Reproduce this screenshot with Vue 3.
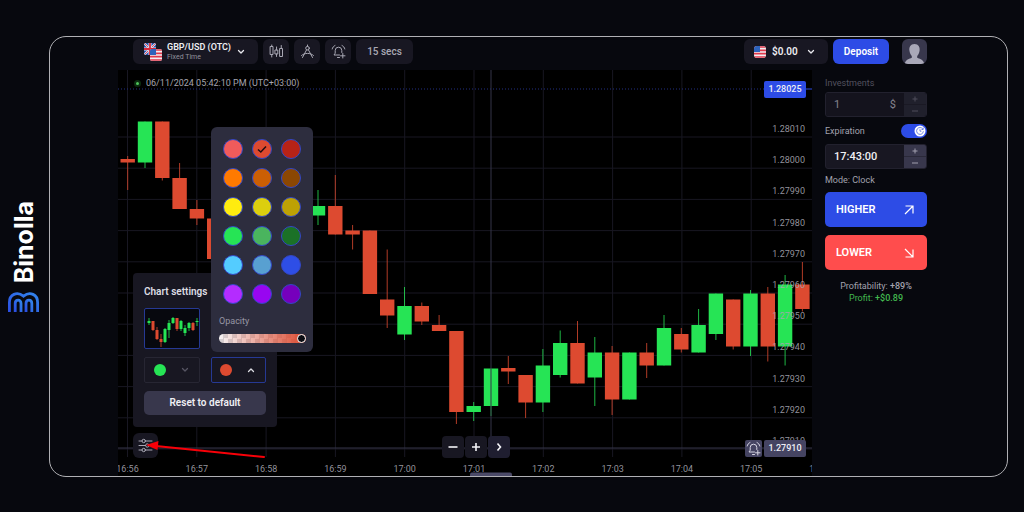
<script setup>
import { ref } from 'vue'

const step = 17.3
const firstX = 9.7

// [slot, colour, body top, body bottom, wick top, wick bottom]
const candles = [
  [0, 'r', 89, 92.5, 86, 120],
  [1, 'g', 51.5, 92.5, 51.5, 98],
  [2, 'r', 51.5, 108, 51.5, 110.5],
  [3, 'r', 108, 139, 93, 139],
  [4, 'r', 139, 148.5, 130, 155],
  [5, 'r', 148.5, 189, 148.5, 189],
  [11, 'g', 136, 145.5, 120, 155],
  [12, 'r', 136, 164.5, 105, 164.5],
  [13, 'r', 160.5, 164.5, 155, 179.5],
  [14, 'r', 160.5, 224, 160.5, 224],
  [15, 'r', 229.5, 245.5, 179.5, 258],
  [16, 'g', 236, 264.5, 217, 270],
  [17, 'r', 236, 251.5, 232.5, 255],
  [18, 'r', 255, 261, 245, 261],
  [19, 'r', 261, 342, 261, 354],
  [20, 'g', 336, 342, 332, 351],
  [21, 'g', 298.5, 336, 298.5, 346],
  [22, 'r', 298, 301.5, 286, 314],
  [23, 'r', 305, 332.5, 305, 348],
  [24, 'g', 295.5, 332.5, 279, 342],
  [25, 'g', 273, 305, 260.5, 307.5],
  [26, 'r', 273, 313.5, 251, 313.5],
  [27, 'g', 282.5, 307.5, 267, 336],
  [28, 'r', 282.5, 329.5, 276, 345],
  [29, 'g', 282.5, 329.5, 282.5, 329.5],
  [30, 'r', 282.5, 295.5, 273, 308],
  [31, 'g', 258, 295.5, 245, 295.5],
  [32, 'r', 264, 279.5, 258, 282.5],
  [33, 'g', 255, 282.5, 239, 282.5],
  [34, 'g', 223.5, 264, 223.5, 270],
  [35, 'r', 229.5, 276.5, 229.5, 279.5],
  [36, 'g', 223.5, 276.5, 220, 286],
  [37, 'r', 223.5, 276.5, 217, 291.5],
  [38, 'g', 214.5, 276.5, 205, 295.5],
  [39, 'r', 214.5, 239, 192, 241.5],
].map(([i, c, top, bottom, high, low]) => ({ x: firstX + i * step, c, top, bottom, high, low }))

const prices = ['1.28010', '1.28000', '1.27990', '1.27980', '1.27970', '1.27960', '1.27950', '1.27940', '1.27930', '1.27920', '1.27910']
  .map((label, i) => ({ label, y: 62 + i * 31.2, line: 67 + i * 31.2 }))

const times = ['16:56', '16:57', '16:58', '16:59', '17:00', '17:01', '17:02', '17:03', '17:04', '17:05', '17:06']
  .map((label, i) => ({ label, x: 9.5 + i * 69.3 }))

const miniCandles = [
  [4, 'g', 12, 14, 9, 16], [8, 'r', 12, 21, 12, 22], [12, 'r', 21, 30, 18, 31], [16, 'r', 30, 33, 25, 38],
  [20, 'g', 20, 33, 19, 34], [24, 'g', 14, 21, 11, 29], [28, 'g', 9, 14, 8, 15], [32, 'r', 9, 20, 9, 22],
  [36, 'g', 12, 20, 11, 22], [40, 'g', 19, 24, 16, 27], [44, 'g', 14, 19, 13, 22], [48, 'r', 14, 21, 13, 22], [52, 'g', 12, 13, 9, 17],
].map(([x, c, top, bottom, high, low]) => ({ x, c, top, bottom, high, low }))

const colours = [
  ['coral', '#f05b5b'], ['tomato', '#dd4a30'], ['crimson', '#b72317'],
  ['orange', '#ff7a00'], ['dark orange', '#cb5f04'], ['brown', '#8b4703'],
  ['yellow', '#ffec0f'], ['mustard', '#dccf0e'], ['olive', '#bda104'],
  ['green', '#26e455'], ['mid green', '#4ab45e'], ['dark green', '#1b7127'],
  ['sky', '#54ccff'], ['steel', '#58a0d1'], ['blue', '#2e4ee6'],
  ['violet', '#b42cff'], ['purple', '#9806f0'], ['dark purple', '#7600bc'],
]
const downColour = ref('#dd4a30')
const opacity = ref(100)
const amount = ref('1')
const expiry = ref('17:43:00')
const clockMode = ref(true)
</script>

<template>
  <div class="page">
    <aside class="brand">
      <span class="brand-name">Binolla</span>
      <svg class="brand-mark" viewBox="0 0 31 20" aria-hidden="true">
        <defs>
          <linearGradient id="mark" x1="0" y1="1" x2="1" y2="0">
            <stop offset="0" stop-color="#2b4fe4" /><stop offset="1" stop-color="#3284ea" />
          </linearGradient>
        </defs>
        <g fill="none" stroke="url(#mark)" stroke-width="2.8">
          <path d="M1.400 20V10.500C1.400 2.500 9 -1 15.500 4.200C22 -1 29.600 2.500 29.600 10.500V20" />
          <path d="M7.200 20V11.500C7.200 7 13 7 13 11.500V20" />
          <path d="M18 20V11.500C18 7 23.800 7 23.800 11.500V20" />
        </g>
      </svg>
    </aside>

    <main class="frame">
      <header class="topbar">
        <button class="tile pair" type="button">
          <svg class="flags" viewBox="0 0 18 18" aria-hidden="true">
            <defs>
              <clipPath id="uk"><rect width="12" height="12" rx="2" /></clipPath>
              <clipPath id="us"><rect x="6" y="6" width="12" height="12" rx="2" /></clipPath>
            </defs>
            <g clip-path="url(#uk)">
              <rect width="12" height="12" fill="#2450a8" />
              <path d="M0 0L12 12M12 0L0 12" stroke="#e8e8f4" stroke-width="2" />
              <path d="M0 0L12 12M12 0L0 12" stroke="#d8283c" stroke-width="0.800" />
              <path d="M6 0V12M0 6H12" stroke="#e8e8f4" stroke-width="3" />
              <path d="M6 0V12M0 6H12" stroke="#d8283c" stroke-width="1.800" />
            </g>
            <g clip-path="url(#us)">
              <rect x="6" y="6" width="12" height="12" fill="#f1eef2" />
              <path d="M6 7H18M6 10.300H18M6 13.600H18M6 17H18" stroke="#e0394c" stroke-width="1.700" />
              <rect x="6" y="6" width="6" height="6" fill="#2d63bc" />
            </g>
          </svg>
          <span class="pair-text"><b>GBP/USD (OTC)</b><small>Fixed Time</small></span>
          <svg class="chev" viewBox="0 0 8 6" aria-hidden="true"><path d="M1.500 1.500L4 4L6.500 1.500" /></svg>
        </button>
        <button class="tile square" type="button" aria-label="Chart type">
          <svg class="icon" viewBox="0 0 15 15" aria-hidden="true">
            <rect x="1.500" y="2.500" width="2.500" height="8" /><path d="M2.750 1V2.500M2.750 10.500V13" />
            <rect x="6.300" y="6" width="2.500" height="4" /><path d="M7.550 3V6M7.550 10V12.500" />
            <rect x="11" y="4.500" width="2.500" height="8" /><path d="M12.250 1.500V4.500" />
          </svg>
        </button>
        <button class="tile square" type="button" aria-label="Drawing tools">
          <svg class="icon" viewBox="0 0 15 15" aria-hidden="true">
            <circle cx="7.500" cy="4.200" r="1.800" /><path d="M7.500 1V2.400M6.600 5.800L2.500 13.500M8.400 5.800L12.500 13.500M1.500 11.500C4.500 8.600 10.500 8.600 13.500 11.500" />
          </svg>
        </button>
        <button class="tile square" type="button" aria-label="Add alert">
          <svg class="icon" viewBox="0 0 15 15" aria-hidden="true">
            <path d="M8.500 11H3L4.200 9.200V6.500A3.300 3.300 0 0 1 10.800 6.500V8.500M6.500 13.500H8.500M4 1.500C2.500 2.200 1.500 3.500 1.200 5M11 1.500C12.500 2.200 13.500 3.500 13.800 5M11.800 9.500V14M9.500 11.800H14" />
          </svg>
        </button>
        <button class="tile interval" type="button">15 secs</button>
        <button class="tile balance" type="button">
          <svg class="flag" viewBox="0 0 12 12" aria-hidden="true">
            <defs><clipPath id="us2"><rect width="12" height="12" rx="3" /></clipPath></defs>
            <g clip-path="url(#us2)">
              <rect width="12" height="12" fill="#f1eef2" />
              <path d="M0 1H12M0 4.300H12M0 7.600H12M0 11H12" stroke="#e0394c" stroke-width="1.700" />
              <rect width="6" height="6" fill="#2d63bc" />
            </g>
          </svg>
          <b>$0.00</b>
          <svg class="chev" viewBox="0 0 8 6" aria-hidden="true"><path d="M1.500 1.500L4 4L6.500 1.500" /></svg>
        </button>
        <button class="deposit" type="button">Deposit</button>
        <button class="avatar" type="button" aria-label="Profile">
          <svg viewBox="0 0 25 25" aria-hidden="true">
            <path fill="#a9a8b8" d="M12.500 5C16.500 5 18 8 17.600 11.500C17.300 14 16.300 15.800 15.200 17V18.800C17.500 20 21.500 20.500 22.300 25H2.700C3.500 20.500 7.500 20 9.800 18.800V17C8.700 15.800 7.700 14 7.400 11.500C7 8 8.500 5 12.500 5Z" />
          </svg>
        </button>
      </header>

      <div class="body">
        <section class="chart">
          <svg class="plot" viewBox="0 0 694 406" role="img" aria-label="GBP/USD price chart">
            <g class="grid">
              <line v-for="p in prices" :key="p.label" x1="0" x2="694" :y1="p.line" :y2="p.line" />
              <line v-for="t in times" :key="t.label" :x1="t.x" :x2="t.x" y1="0" y2="387" />
            </g>
            <line class="dotted" x1="0" x2="646" y1="19" y2="19" />
            <line class="marker" x1="687" x2="694" y1="19" y2="19" />
            <g v-for="k in candles" :key="k.x" :class="k.c">
              <line class="wick" :x1="k.x" :x2="k.x" :y1="k.high" :y2="k.low" />
              <rect :x="k.x - 7.2" :y="k.top" width="14.400" :height="k.bottom - k.top" />
            </g>
            <line class="cross" x1="0" x2="694" y1="378" y2="378" />
            <line class="cross" x1="373" x2="373" y1="0" y2="377" />
            <text v-for="p in prices" :key="p.label" class="price" x="687" :y="p.y">{{ p.label }}</text>
            <text v-for="t in times" :key="t.label" class="time" :x="t.x" y="401.500">{{ t.label }}</text>
            <rect class="handle" x="352" y="402.500" width="42" height="8" rx="2" />
          </svg>

          <p class="clock"><i class="dot"></i>06/11/2024 05:42:10 PM (UTC+03:00)</p>
          <span class="tag current">1.28025</span>
          <div class="cursor-tags">
            <button class="alert" type="button" aria-label="Add alert at price">
              <svg class="icon" viewBox="0 0 15 15" aria-hidden="true">
                <path d="M8.500 11H3L4.200 9.200V6.500A3.300 3.300 0 0 1 10.800 6.500V8.500M6.500 13.500H8.500M4 1.500C2.500 2.200 1.500 3.500 1.200 5M11 1.500C12.500 2.200 13.500 3.500 13.800 5M11.800 9.500V14M9.500 11.800H14" />
              </svg>
            </button>
            <span class="tag">1.27910</span>
          </div>

          <div class="zoom">
            <button type="button" aria-label="Zoom out"><svg viewBox="0 0 12 12"><path d="M1.500 6H10.500" /></svg></button>
            <button type="button" aria-label="Zoom in"><svg viewBox="0 0 12 12"><path d="M2 6H10M6 2V10" /></svg></button>
            <button type="button" aria-label="Scroll to latest"><svg viewBox="0 0 12 12"><path d="M4.500 2.500L7.500 6L4.500 9.500" /></svg></button>
          </div>

          <div class="settings">
            <h2>Chart settings</h2>
            <button class="preview" type="button" aria-label="Candles">
              <svg viewBox="0 0 54 39" aria-hidden="true">
                <g v-for="k in miniCandles" :key="k.x" :class="k.c">
                  <line class="wick" :x1="k.x" :x2="k.x" :y1="k.high" :y2="k.low" />
                  <rect :x="k.x - 1.5" :y="k.top" width="3" :height="k.bottom - k.top" />
                </g>
              </svg>
            </button>
            <div class="pickers">
              <button class="picker" type="button" aria-label="Rising candle colour">
                <i class="blob up"></i><svg class="chev" viewBox="0 0 8 6"><path d="M1.500 1.500L4 4L6.500 1.500" /></svg>
              </button>
              <button class="picker open" type="button" aria-label="Falling candle colour" aria-expanded="true">
                <i class="blob" :style="{ background: downColour }"></i><svg class="chev" viewBox="0 0 8 6"><path d="M1.500 4.500L4 2L6.500 4.500" /></svg>
              </button>
            </div>
            <button class="reset" type="button">Reset to default</button>
          </div>

          <div class="palette">
            <div class="swatches">
              <label v-for="[name, hex] in colours" :key="hex" class="swatch" :style="{ background: hex }">
                <input v-model="downColour" type="radio" name="colour" :value="hex" :aria-label="name" />
                <svg v-if="downColour === hex" viewBox="0 0 10 10" aria-hidden="true"><path d="M1 5.500L3.800 8L9 2.500" /></svg>
              </label>
            </div>
            <label class="opacity-label" for="opacity">Opacity</label>
            <input id="opacity" v-model="opacity" class="opacity" type="range" min="0" max="100" />
          </div>

          <button class="settings-toggle" type="button" aria-label="Chart settings">
            <svg class="icon" viewBox="0 0 15 15" aria-hidden="true">
              <path d="M1 3H4M7.500 3H14M1 7.500H7.500M11 7.500H14M1 12H4M7.500 12H14" />
              <circle cx="5.700" cy="3" r="1.700" /><circle cx="9.300" cy="7.500" r="1.700" /><circle cx="5.700" cy="12" r="1.700" />
            </svg>
          </button>
          <svg class="pointer" viewBox="0 0 120 18" aria-hidden="true">
            <path d="M10 5L118 16" stroke="#f80008" stroke-width="2" stroke-linecap="round" />
            <path d="M0 4L12.500 0L11.500 9Z" fill="#f80008" />
          </svg>
        </section>

        <form class="trade" @submit.prevent>
          <label class="dim" for="amount">Investments</label>
          <div class="field muted">
            <div class="box"><input id="amount" v-model="amount" type="text" /><span>$</span></div>
            <div class="stepper">
              <button type="button" aria-label="Increase investment"><svg viewBox="0 0 6 6"><path d="M0.500 3H5.500M3 0.500V5.500" /></svg></button>
              <button type="button" aria-label="Decrease investment"><svg viewBox="0 0 6 6"><path d="M0 3H6" /></svg></button>
            </div>
          </div>
          <div class="row">
            <label for="expiry">Expiration</label>
            <label class="switch">
              <input v-model="clockMode" type="checkbox" aria-label="Clock mode" />
              <svg viewBox="0 0 12 12" aria-hidden="true">
                <circle cx="6" cy="6" r="5.500" fill="#fff" />
                <path d="M8.800 4A3.400 3.400 0 1 0 9.400 6.300M9.200 2.500V4.500H7.500M6 4.300V6.200H7.400" fill="none" stroke="#4a63dc" stroke-width="0.800" />
              </svg>
            </label>
          </div>
          <div class="field">
            <div class="box"><input id="expiry" v-model="expiry" type="text" /></div>
            <div class="stepper">
              <button type="button" aria-label="Later"><svg viewBox="0 0 6 6"><path d="M0.500 3H5.500M3 0.500V5.500" /></svg></button>
              <button type="button" aria-label="Earlier"><svg viewBox="0 0 6 6"><path d="M0 3H6" /></svg></button>
            </div>
          </div>
          <p class="mode">Mode: Clock</p>
          <button class="bet higher" type="submit">HIGHER
            <svg viewBox="0 0 12 12" aria-hidden="true"><path d="M2 10L10 2M2.500 2H10V9.500" /></svg>
          </button>
          <button class="bet lower" type="submit">LOWER
            <svg viewBox="0 0 12 12" aria-hidden="true"><path d="M2 2L10 10M10 2.500V10H2.500" /></svg>
          </button>
          <p class="result">Profitability: <b>+89%</b></p>
          <p class="result gain">Profit: <b>+$0.89</b></p>
        </form>
      </div>
    </main>
  </div>
</template>

<style>
body { background: #07080e; }
</style>

<style scoped>
* { box-sizing: border-box; }
.page { display: flex; min-height: 100vh; padding: 36px 16px 35px 0; background: #07080e; color: #a3a2ae; font-family: Roboto, "Liberation Sans", sans-serif; font-size: 9px; line-height: 12px; }
button, input { font: inherit; color: inherit; margin: 0; padding: 0; border: 0; background: none; }
button { display: flex; align-items: center; justify-content: center; cursor: pointer; }
p, h2 { margin: 0; }
b { font-weight: 500; }
svg { display: block; }

.brand { display: flex; flex-direction: column; align-items: center; justify-content: center; gap: 8px; width: 49px; padding-right: 2px; }
.brand-name { writing-mode: vertical-rl; transform: rotate(180deg); font-family: Inter, sans-serif; font-weight: 700; font-size: 25px; line-height: 28px; color: #fff; }
.brand-mark { width: 31px; height: 20px; }

.frame { flex: 1; align-self: flex-start; min-width: 0; padding: 0 80px 0 68px; border: 1px solid #b0b0b4; border-radius: 17px; overflow: hidden; }

.topbar { display: flex; gap: 5px; padding: 2px 0 6px 15px; }
.tile { height: 25px; border-radius: 6px; background: #181722; color: #a9a8b4; }
.square { width: 26px; }
.icon { width: 15px; height: 15px; fill: none; stroke: #a9a8b4; stroke-width: 1; stroke-linecap: round; stroke-linejoin: round; }
.chev { width: 8px; height: 6px; fill: none; stroke: #e8e8ee; stroke-width: 1.300; stroke-linecap: round; stroke-linejoin: round; }
.pair { gap: 5px; padding: 0 13px 0 11px; width: 125px; justify-content: flex-start; }
.pair .chev { margin-left: auto; }
.flags { width: 18px; height: 18px; }
.pair-text { display: flex; flex-direction: column; text-align: left; line-height: 10px; white-space: nowrap; }
.pair-text b { color: #eeeef2; font-weight: 600; }
.pair-text small { font-size: 7px; color: #92919c; }
.interval { width: 57px; font-size: 10px; font-weight: 500; }
.balance { margin-left: auto; width: 84px; gap: 6px; color: #eeeef2; font-size: 10px; justify-content: flex-start; padding: 0 13px 0 10px; }
.balance .chev { margin-left: auto; }
.balance b { font-weight: 600; }
.flag { width: 12px; height: 12px; }
.deposit { height: 25px; width: 56px; border-radius: 6px; background: #2d4ce6; color: #fff; font-size: 10px; font-weight: 600; }
.avatar { width: 25px; height: 25px; margin-left: 8px; border-radius: 6px; background: #38374c; overflow: hidden; }
.avatar svg { width: 25px; height: 25px; }

.body { display: flex; gap: 13px; align-items: flex-start; }
.chart { position: relative; flex: 1; min-width: 0; background: #000; }
.plot { width: 100%; height: auto; }
.grid line { stroke: #181722; stroke-width: 1; }
.dotted { stroke: #222e80; stroke-dasharray: 1 2; }
.marker { stroke: #2d4ce6; }
.cross { stroke: #353448; stroke-width: 1; }
.g { fill: #26e455; stroke: #26e455; }
.r { fill: #dd4a30; stroke: #dd4a30; }
.g rect, .r rect { stroke: none; }
.wick { stroke-width: 1; opacity: 0.8; }
.price, .time { font-size: 9px; fill: #a5a4af; fill-opacity: 0.9; }
.price { text-anchor: end; }
.time { text-anchor: middle; }
.handle { fill: #4b4a68; }

.clock { position: absolute; left: 16px; top: 7px; display: flex; align-items: center; gap: 5px; color: #a5a4af; white-space: nowrap; }
.dot { width: 7px; height: 7px; border-radius: 4px; border: 2px solid #0c2d11; background: #4fc45c; }
.tag { display: block; width: 42px; border-radius: 2px; background: #454462; color: #eeeef5; font-weight: 500; line-height: 17px; text-align: center; }
.current { position: absolute; right: 6px; top: 11px; background: #2d4ce6; }
.cursor-tags { position: absolute; right: 6px; bottom: 19px; display: flex; gap: 2px; }
.alert { width: 17px; height: 17px; border-radius: 2px; background: #454462; }
.alert .icon { stroke: #d5d4e2; }

.zoom { position: absolute; left: 324px; bottom: 18px; display: flex; gap: 1px; }
.zoom button { width: 22px; height: 22px; border-radius: 4px; background: #181722; }
.zoom button:last-child { background: #1f1e30; }
.zoom svg { width: 12px; height: 12px; fill: none; stroke: #f4f4f8; stroke-width: 1.600; }

.settings { position: absolute; left: 15px; bottom: 49px; width: 144px; padding: 12px 11px; border-radius: 4px; background: #181722; }
.settings h2 { font-size: 10px; line-height: 13px; font-weight: 600; color: #dddde3; }
.preview { width: 56px; height: 41px; margin-top: 10px; border: 1px solid #263994; border-radius: 2px; background: #07080e; }
.preview svg { width: 54px; height: 39px; }
.pickers { display: flex; gap: 11px; margin: 8px 0; }
.picker { flex: 1; height: 26px; padding: 0 10px 0 9px; justify-content: space-between; border: 1px solid #272633; border-radius: 2px; }
.picker .chev { stroke: #565563; }
.open { border-color: #263994; padding-left: 8px; }
.picker.open .chev { stroke: #dddde3; }
.blob { width: 12px; height: 12px; border-radius: 6px; }
.up { background: #26e455; }
.reset { width: 100%; height: 24px; border-radius: 5px; background: #38374c; color: #f0f0f4; font-size: 10px; font-weight: 600; }

.palette { position: absolute; left: 93px; bottom: 124px; width: 102px; padding: 12px 7px 9px 8px; border-radius: 6px; background: #2d2d3e; }
.swatches { display: grid; grid-template-columns: repeat(3, 20px); gap: 9px; padding-left: 4px; }
.swatch { display: flex; align-items: center; justify-content: center; height: 20px; border: 1px solid #3347c4; border-radius: 10px; }
.swatch input { appearance: none; position: absolute; }
.swatch svg { width: 10px; height: 10px; fill: none; stroke: #220c10; stroke-width: 1.500; }
.opacity-label { display: block; margin-top: 11px; color: #9796a4; }
.opacity { appearance: none; display: block; width: 87px; height: 9px; margin-top: 7px; border-radius: 5px; background: linear-gradient(90deg, rgba(221, 74, 48, 0), #dd4a30), repeating-conic-gradient(#d5d3d6 0 25%, #f6f4f5 0 50%) 0 0 / 9px 9px; }
.opacity::-webkit-slider-thumb { appearance: none; width: 9px; height: 9px; border: 1px solid #fff; border-radius: 5px; background: #0c0c12; }

.settings-toggle { position: absolute; left: 15px; bottom: 18px; width: 25px; height: 25px; border-radius: 6px; background: #181722; }
.pointer { position: absolute; left: 28px; bottom: 17px; width: 120px; height: 18px; fill: none; }

.trade { width: 102px; padding-top: 7px; }
.dim { display: block; color: #52515e; }
.field { display: flex; height: 25px; border-radius: 3px; overflow: hidden; background: #181722; border: 1px solid #22212e; }
.dim + .field { margin-top: 3px; }
.box { flex: 1; display: flex; align-items: center; min-width: 0; padding: 0 8px; color: #f0f0f4; font-size: 11px; font-weight: 500; }
.box input { width: 100%; min-width: 0; }
.stepper { display: flex; flex-direction: column; width: 22px; gap: 1px; background: #2a2939; }
.stepper button { flex: 1; background: #38374c; }
.stepper svg { width: 6px; height: 6px; fill: none; stroke: #a09fae; stroke-width: 1; }
.muted .box { color: #85848f; background: #14131d; font-weight: 400; }
.muted .stepper { background: #1a1924; }
.muted .stepper button { background: #20202c; }
.muted .stepper svg { stroke: #4e4d5a; }
.row { display: flex; align-items: center; justify-content: space-between; margin: 7px 0 6px; }
.switch { display: flex; justify-content: flex-end; align-items: center; width: 26px; height: 14px; padding-right: 1px; border-radius: 7px; background: #2d4ce6; }
.switch input { appearance: none; position: absolute; }
.switch svg { width: 12px; height: 12px; }
.mode { margin: 5px 0 6px; }
.bet { width: 100%; height: 35px; margin-bottom: 8px; padding: 0 12px 0 11px; justify-content: space-between; border-radius: 5px; color: #fff; font-size: 11px; font-weight: 600; }
.bet svg { width: 12px; height: 12px; fill: none; stroke: #fff; stroke-width: 1.200; }
.higher { background: #2d4ce6; }
.lower { background: #ff4d4d; margin-bottom: 10px; }
.result { text-align: center; line-height: 12px; }
.gain { color: #42b74f; }
</style>
